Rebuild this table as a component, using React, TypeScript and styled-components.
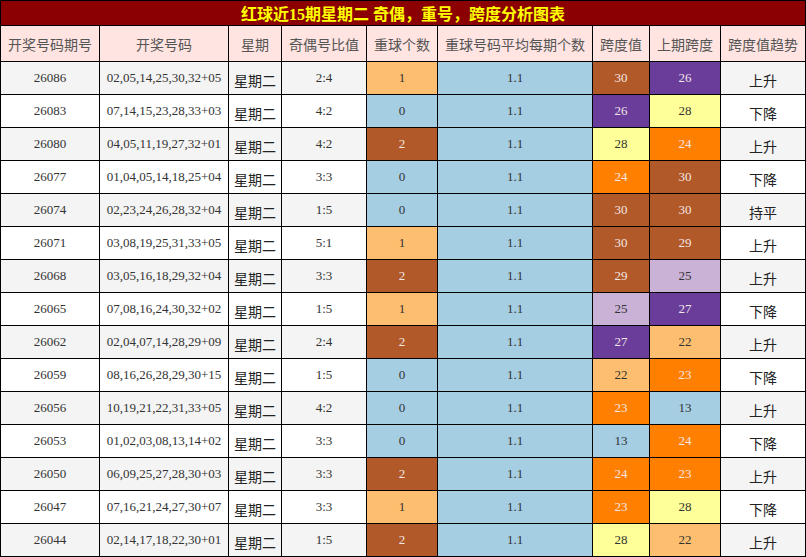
import React from "react";
import styled, { createGlobalStyle } from "styled-components";

const Global = createGlobalStyle`
  html, body { margin: 0; padding: 0; background: #ffffff; }
`;

const C = {
  blue: "#a6cee3",
  lorange: "#fdbf6f",
  brown: "#b15928",
  orange: "#ff7f00",
  purple: "#6a3d9a",
  lav: "#cab2d6",
  yellow: "#ffff99",
};

const dark = new Set([C.brown, C.orange, C.purple]);

const repColor = (n: number) => (n === 0 ? C.blue : n === 1 ? C.lorange : C.brown);
const spanColor = (n: number): string => {
  if (n === 13) return C.blue;
  if (n === 22) return C.lorange;
  if (n === 23 || n === 24) return C.orange;
  if (n === 25) return C.lav;
  if (n === 26 || n === 27) return C.purple;
  if (n === 28) return C.yellow;
  return C.brown;
};

type Row = [string, string, string, number, number, number, string];

const rows: Row[] = [
  ["26086", "02,05,14,25,30,32+05", "2:4", 1, 30, 26, "上升"],
  ["26083", "07,14,15,23,28,33+03", "4:2", 0, 26, 28, "下降"],
  ["26080", "04,05,11,19,27,32+01", "4:2", 2, 28, 24, "上升"],
  ["26077", "01,04,05,14,18,25+04", "3:3", 0, 24, 30, "下降"],
  ["26074", "02,23,24,26,28,32+04", "1:5", 0, 30, 30, "持平"],
  ["26071", "03,08,19,25,31,33+05", "5:1", 1, 30, 29, "上升"],
  ["26068", "03,05,16,18,29,32+04", "3:3", 2, 29, 25, "上升"],
  ["26065", "07,08,16,24,30,32+02", "1:5", 1, 25, 27, "下降"],
  ["26062", "02,04,07,14,28,29+09", "2:4", 2, 27, 22, "上升"],
  ["26059", "08,16,26,28,29,30+15", "1:5", 0, 22, 23, "下降"],
  ["26056", "10,19,21,22,31,33+05", "4:2", 0, 23, 13, "上升"],
  ["26053", "01,02,03,08,13,14+02", "3:3", 0, 13, 24, "下降"],
  ["26050", "06,09,25,27,28,30+03", "3:3", 2, 24, 23, "上升"],
  ["26047", "07,16,21,24,27,30+07", "3:3", 1, 23, 28, "下降"],
  ["26044", "02,14,17,18,22,30+01", "1:5", 2, 28, 22, "上升"],
];

const headers = [
  "开奖号码期号",
  "开奖号码",
  "星期",
  "奇偶号比值",
  "重球个数",
  "重球号码平均每期个数",
  "跨度值",
  "上期跨度",
  "跨度值趋势",
];

const Board = styled.div`
  display: grid;
  grid-template-columns: 98px 128px 52px 84px 70px 154px 56px 70px 84px;
  grid-template-rows: 24px 35px repeat(15, 32px);
  gap: 1px;
  padding: 1px;
  width: 806px;
  box-sizing: border-box;
  background: #000000;
`;

const Title = styled.div`
  grid-column: 1 / -1;
  background: #8b0000;
  color: #ffff00;
  font-family: "Liberation Serif", "Noto Sans CJK SC", serif;
  font-weight: bold;
  font-size: 16px;
  display: flex;
  align-items: center;
  justify-content: center;
  white-space: pre;
`;

const HeadCell = styled.div`
  background: #ffe4e1;
  color: #555555;
  font-family: "Noto Sans CJK SC", sans-serif;
  font-size: 14px;
  display: flex;
  align-items: center;
  justify-content: center;
  white-space: nowrap;
`;

const Cell = styled.div<{ $bg: string; $light?: boolean }>`
  background: ${(p) => p.$bg};
  color: ${(p) => (p.$light ? "#f2e6e6" : "#333333")};
  font-family: "Liberation Serif", "Noto Sans CJK SC", serif;
  font-size: 13px;
  display: flex;
  align-items: center;
  justify-content: center;
  white-space: nowrap;
`;

const WordCell = styled.div<{ $bg: string }>`
  background: ${(p) => p.$bg};
  color: #222222;
  font-family: "Noto Sans CJK SC", sans-serif;
  font-size: 14px;
  display: flex;
  align-items: center;
  justify-content: center;
  padding-top: 3px;
  box-sizing: border-box;
  white-space: nowrap;
`;

export default function App() {
  return (
    <>
      <Global />
      <Board>
        <Title>红球近15期星期二 奇偶，重号，跨度分析图表</Title>
        {headers.map((h) => (
          <HeadCell key={h}>{h}</HeadCell>
        ))}
        {rows.map((r, i) => {
          const base = i % 2 === 0 ? "#f4f4f4" : "#ffffff";
          const rc = repColor(r[3]);
          const sc = spanColor(r[4]);
          const pc = spanColor(r[5]);
          return (
            <React.Fragment key={r[0]}>
              <Cell $bg={base}>{r[0]}</Cell>
              <Cell $bg={base}>{r[1]}</Cell>
              <WordCell $bg={base}>星期二</WordCell>
              <Cell $bg={base}>{r[2]}</Cell>
              <Cell $bg={rc} $light={dark.has(rc)}>{r[3]}</Cell>
              <Cell $bg={C.blue}>1.1</Cell>
              <Cell $bg={sc} $light={dark.has(sc)}>{r[4]}</Cell>
              <Cell $bg={pc} $light={dark.has(pc)}>{r[5]}</Cell>
              <WordCell $bg={base}>{r[6]}</WordCell>
            </React.Fragment>
          );
        })}
      </Board>
    </>
  );
}
